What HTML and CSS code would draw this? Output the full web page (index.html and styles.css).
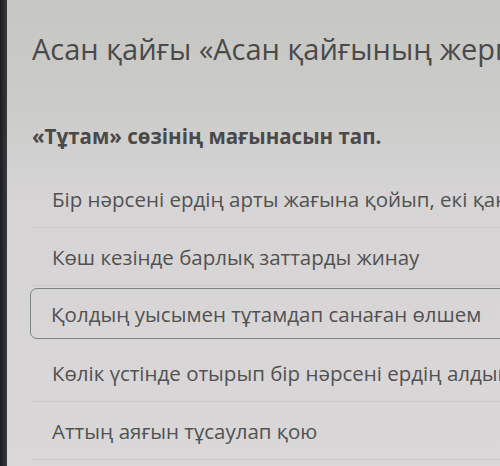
FILE: index.html
```html
<!DOCTYPE html>
<html lang="kk">
<head>
<meta charset="utf-8">
<link rel="stylesheet" href="styles.css">
</head>
<body>
<div class="screen">
  <div class="edge"></div>
  <main class="content">
    <header class="header">
      <h1 class="title">Асан қайғы «Асан қайғының жерге қатысты айтқандары»</h1>
    </header>
    <h2 class="question">«Тұтам» сөзінің мағынасын тап.</h2>
    <ul class="options">
      <li class="option">Бір нәрсені ердің арты жағына қойып, екі қанжығамен байлау</li>
      <li class="option">Көш кезінде барлық заттарды жинау</li>
      <li class="option selected"><span class="box">Қолдың уысымен тұтамдап санаған өлшем</span></li>
      <li class="option">Көлік үстінде отырып бір нәрсені ердің алдына өңгеру</li>
      <li class="option">Аттың аяғын тұсаулап қою</li>
    </ul>
  </main>
</div>
</body>
</html>
```

FILE: styles.css
```css
html, body {
  margin: 0;
  padding: 0;
  width: 500px;
  height: 466px;
  overflow: hidden;
}
body {
  font-family: "Open Sans", "Noto Sans", sans-serif;
  background: linear-gradient(180deg, #c6c6c3 0px, #cbcbc9 100px, #d6d4d5 200px, #d9d7d8 466px);
  color: #4e4e4e;
}
.screen {
  display: flex;
  height: 466px;
}
.edge {
  width: 7px;
  flex: none;
  background: linear-gradient(90deg, #1c1d21, #3a3b3f);
}
.content {
  flex: 1;
  min-width: 0;
  padding-left: 25px;
  overflow: hidden;
}
.header {
  padding-top: 30px;
  height: 92px;
  box-sizing: border-box;
}
.title {
  margin: 0;
  font-size: 29px;
  font-weight: 400;
  line-height: 38px;
  white-space: nowrap;
  color: #4a4a4a;
}
.question {
  margin: 31px 0 0;
  font-size: 20.5px;
  font-weight: 700;
  line-height: 26px;
  color: #4a4a4a;
  white-space: nowrap;
}
.options {
  list-style: none;
  margin: 21px 0 0;
  padding: 0;
}
.option {
  height: 58px;
  box-sizing: border-box;
  display: flex;
  align-items: center;
  padding-left: 20px;
  font-size: 20.5px;
  white-space: nowrap;
  border-bottom: 1px solid #cac9cc;
  color: #525252;
}
.option.selected {
  padding: 2px 0 5px 0;
  align-items: stretch;
  border-bottom: none;
}
.box {
  flex: 1;
  display: flex;
  align-items: center;
  padding-left: 20px;
  margin-left: -2px;
  margin-right: -20px;
  border: 1.5px solid #7c8686;
  border-radius: 7px;
}
```
